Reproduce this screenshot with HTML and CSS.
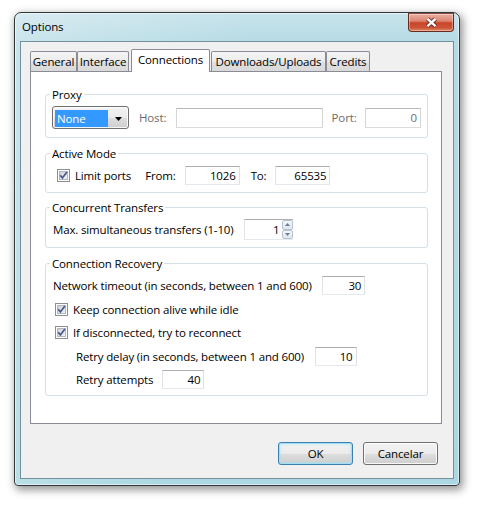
FILE: index.html
```html
<!DOCTYPE html>
<html lang="en">
<head>
<meta charset="utf-8">
<title>Options</title>
<link rel="stylesheet" href="styles.css">
</head>
<body>
<div class="window">
  <div class="titlebar">
    <span class="title">Options</span>
    <div class="close">
      <svg width="13" height="11" viewBox="0 0 13 11"><path d="M2.5 1.8 L10.5 9.2 M10.5 1.8 L2.5 9.2" stroke="#4b1a10" stroke-width="4.4" fill="none" opacity=".7"/><path d="M2.5 1.8 L10.5 9.2 M10.5 1.8 L2.5 9.2" stroke="#fff" stroke-width="2.4" fill="none"/></svg>
    </div>
  </div>
  <div class="client">
    <div class="tabs">
      <div class="tab t-gen">General</div>
      <div class="tab t-int">Interface</div>
      <div class="tab active t-con">Connections</div>
      <div class="tab t-dl">Downloads/Uploads</div>
      <div class="tab t-cr">Credits</div>
    </div>
    <div class="panel">
      <fieldset class="group g-proxy">
        <legend>Proxy</legend>
        <div class="gbody">
          <div class="row">
            <div class="combo">
              <span class="combo-val">None</span>
              <span class="combo-arrow"><svg width="7" height="4" viewBox="0 0 7 4"><path d="M0 0 H7 L3.5 4 Z" fill="#000"/></svg></span>
            </div>
            <span class="lbl disabled lbl-host">Host:</span>
            <span class="edit off host"></span>
            <span class="lbl disabled lbl-port">Port:</span>
            <span class="edit off port">0</span>
          </div>
        </div>
      </fieldset>

      <fieldset class="group g-active">
        <legend>Active Mode</legend>
        <div class="gbody">
          <div class="row">
            <svg class="chk" width="13" height="13" viewBox="0 0 13 13"><defs><linearGradient id="cb1" x1="0" y1="0" x2="1" y2="1"><stop offset="0" stop-color="#c9cdd3"/><stop offset="1" stop-color="#f6f6f7"/></linearGradient></defs><rect x="0.5" y="0.5" width="12" height="12" fill="#fdfdfd" stroke="#8e8f8f"/><rect x="2.5" y="2.5" width="8" height="8" fill="url(#cb1)" stroke="#b3b8be"/><path d="M3.2 6.3 L5.4 8.9 L9.9 2.9" fill="none" stroke="#45598e" stroke-width="1.7"/></svg>
            <span class="lbl chk-lbl">Limit ports</span>
            <span class="lbl lbl-from">From:</span>
            <span class="edit w55">1026</span>
            <span class="lbl lbl-to">To:</span>
            <span class="edit w55">65535</span>
          </div>
        </div>
      </fieldset>

      <fieldset class="group g-conc">
        <legend>Concurrent Transfers</legend>
        <div class="gbody">
          <div class="row">
            <span class="lbl">Max. simultaneous transfers (1-10)</span>
            <div class="spin">
              <span class="edit spin-edit">1</span>
              <div class="spin-btns">
                <span class="sbtn"><svg width="5" height="3" viewBox="0 0 5 3"><path d="M0 3 L2.5 0 L5 3 Z" fill="#6a7d96"/></svg></span>
                <span class="sbtn"><svg width="5" height="3" viewBox="0 0 5 3"><path d="M0 0 H5 L2.5 3 Z" fill="#6a7d96"/></svg></span>
              </div>
            </div>
          </div>
        </div>
      </fieldset>

      <fieldset class="group g-rec">
        <legend>Connection Recovery</legend>
        <div class="gbody">
          <div class="row r2">
            <span class="lbl">Network timeout (in seconds, between 1 and 600)</span>
            <span class="edit w43 gap">30</span>
          </div>
          <div class="row r2">
            <svg class="chk" width="13" height="13" viewBox="0 0 13 13"><defs><linearGradient id="cb2" x1="0" y1="0" x2="1" y2="1"><stop offset="0" stop-color="#c9cdd3"/><stop offset="1" stop-color="#f6f6f7"/></linearGradient></defs><rect x="0.5" y="0.5" width="12" height="12" fill="#fdfdfd" stroke="#8e8f8f"/><rect x="2.5" y="2.5" width="8" height="8" fill="url(#cb2)" stroke="#b3b8be"/><path d="M3.2 6.3 L5.4 8.9 L9.9 2.9" fill="none" stroke="#45598e" stroke-width="1.7"/></svg>
            <span class="lbl chk-lbl">Keep connection alive while idle</span>
          </div>
          <div class="row r2">
            <svg class="chk" width="13" height="13" viewBox="0 0 13 13"><defs><linearGradient id="cb3" x1="0" y1="0" x2="1" y2="1"><stop offset="0" stop-color="#c9cdd3"/><stop offset="1" stop-color="#f6f6f7"/></linearGradient></defs><rect x="0.5" y="0.5" width="12" height="12" fill="#fdfdfd" stroke="#8e8f8f"/><rect x="2.5" y="2.5" width="8" height="8" fill="url(#cb3)" stroke="#b3b8be"/><path d="M3.2 6.3 L5.4 8.9 L9.9 2.9" fill="none" stroke="#45598e" stroke-width="1.7"/></svg>
            <span class="lbl chk-lbl">If disconnected, try to reconnect</span>
          </div>
          <div class="row r2 indent">
            <span class="lbl">Retry delay (in seconds, between 1 and 600)</span>
            <span class="edit w42 gap">10</span>
          </div>
          <div class="row r2 indent">
            <span class="lbl">Retry attempts</span>
            <span class="edit w42 gap-s">40</span>
          </div>
        </div>
      </fieldset>
    </div>
    <div class="buttons">
      <div class="btn default">OK</div>
      <div class="btn">Cancelar</div>
    </div>
  </div>
</div>
</body>
</html>
```

FILE: styles.css
```css
* {
  box-sizing: border-box;
}

html, body {
  margin: 0;
  padding: 0;
}

body {
  width: 478px;
  height: 506px;
  overflow: hidden;
  background: #ffffff;
  font-family: "Open Sans", "Noto Sans", sans-serif;
  font-size: 11.5px;
  letter-spacing: -0.15px;
  line-height: 15px;
  color: #000;
}

/* window frame */
.window {
  width: 446px;
  height: 474px;
  margin: 12px 0 0 14px;
  border: 1px solid #30373b;
  border-radius: 7px 7px 4px 4px;
  background:
    linear-gradient(100deg, rgba(255,255,255,0.28), rgba(255,255,255,0) 45%),
    linear-gradient(#c8e3eb, #b6dbe4 30px, #abd8e2);
  box-shadow: 2px 3px 8px 1px rgba(0,0,0,0.42), inset 0 0 0 1px rgba(255,255,255,0.55);
  display: flex;
  flex-direction: column;
}

.titlebar {
  height: 28px;
  display: flex;
  align-items: flex-start;
  padding: 0 5px 0 7px;
}

.title {
  margin-top: 6px;
  color: #000;
}

.close {
  margin-left: auto;
  width: 46px;
  height: 19px;
  border: 1px solid #6b2a1d;
  border-top-color: #8a4a3d;
  border-radius: 0 0 4px 4px;
  background: linear-gradient(#eab0a2, #dc8470 42%, #c9452b 52%, #cc5334 80%, #dd8a66);
  box-shadow: inset 0 0 0 1px rgba(255,255,255,0.35);
  display: flex;
  align-items: center;
  justify-content: center;
}

.close svg {
  display: block;
}

/* client area */
.client {
  flex: 1;
  margin: 0 5px 6px 5px;
  border: 1px solid #74909c;
  background: #f0f0f0;
  display: flex;
  flex-direction: column;
  padding: 7px 11px 0 9px;
}

/* tabs */
.tabs {
  height: 22px;
  display: flex;
  align-items: flex-end;
}

.tab {
  height: 20px;
  border: 1px solid #898c95;
  border-bottom: none;
  border-radius: 2px 2px 0 0;
  background: linear-gradient(#f5f5f5, #ebebeb 50%, #e0e0e0 52%, #d9d9d9);
  line-height: 19px;
  text-align: center;
  white-space: nowrap;
}

.tab.active {
  height: 23px;
  margin-bottom: -1px;
  padding-bottom: 3px;
  background: #ffffff;
  position: relative;
  z-index: 1;
}

.t-gen { width: 47px; }
.t-int { width: 52px; margin-right: 2px; }
.t-con { width: 79px; margin-right: 1px; }
.t-dl  { width: 115px; }
.t-cr  { width: 44px; }

.panel {
  height: 353px;
  border: 1px solid #898c95;
  background: #ffffff;
  padding: 15px 13px 0 14px;
}

/* group boxes */
.group {
  margin: 0;
  padding: 0;
  border: 1px solid #d5dfe5;
  border-radius: 3px;
  min-width: 0;
}

.group legend {
  margin-left: 4px;
  padding: 0 2px;
  line-height: 15px;
}

.g-active { margin-top: 8px; }
.g-conc { margin-top: 7px; }
.g-rec { margin-top: 8px; }

.g-proxy .gbody { padding: 4px 6px 8px 6px; }
.g-active .gbody { padding: 3px 6px 5px 9px; }
.g-conc .gbody { padding: 3px 6px 6px 7px; }
.g-rec .gbody { padding: 3px 6px 3.5px 7px; }

.row {
  display: flex;
  align-items: center;
  height: 23px;
}

.row.r2 {
  height: 23.5px;
}

.row.indent {
  padding-left: 23px;
}

.lbl {
  white-space: nowrap;
}

.disabled {
  color: #6d6d6d;
}

/* combo box */
.combo {
  width: 77px;
  height: 23px;
  border: 1px solid #707070;
  border-radius: 3px;
  background: linear-gradient(#f3f3f3, #ebebeb 50%, #dddddd 52%, #cfcfcf);
  box-shadow: inset 0 0 0 1px rgba(255,255,255,0.8);
  display: flex;
  align-items: center;
  padding-left: 2px;
}

.combo-val {
  width: 53px;
  height: 17px;
  margin-top: 2px;
  background: #3399ff;
  color: #fff;
  line-height: 17px;
  padding-left: 2px;
}

.combo-arrow {
  flex: 1;
  display: flex;
  justify-content: center;
  padding-top: 2px;
}

.combo-arrow svg {
  display: block;
}

/* edits */
.edit {
  height: 19px;
  border: 1px solid;
  border-color: #abadb3 #dbdfe6 #e3e9ef #e2e3ea;
  background: #ffffff;
  text-align: right;
  padding-right: 3px;
  line-height: 17px;
  white-space: nowrap;
}

.edit.off {
  height: 20px;
  border-color: #b8b8b8 #d6d6d6 #dcdcdc #d6d6d6;
  color: #6d6d6d;
  line-height: 18px;
}

.lbl-host { margin: 0 9.5px 0 10px; }
.host { flex: 1; }
.lbl-port { margin: 0 8.5px 0 9px; }
.port { width: 56px; }

.chk {
  display: block;
  flex: none;
  margin-left: 2px;
}

.chk-lbl {
  margin-left: 5px;
}

.lbl-from { margin: 0 9px 0 14px; }
.lbl-to { margin: 0 9px 0 11px; }

.w55 { width: 55px; }
.w43 { width: 43px; }
.w42 { width: 42px; }

.gap { margin-left: 10.5px; }
.gap-s { margin-left: 9px; }

/* spin */
.spin {
  display: flex;
  height: 21px;
  margin-left: 10px;
}

.spin-edit {
  width: 38px;
  height: 21px;
  line-height: 19px;
  padding-right: 2px;
  border-right: none;
}

.spin-btns {
  width: 11px;
  height: 21px;
  display: flex;
  flex-direction: column;
  border-top: 1px solid #abadb3;
  border-bottom: 1px solid #e3e9ef;
}

.sbtn {
  flex: 1;
  border: 1px solid #b9c3ce;
  border-radius: 2px;
  background: linear-gradient(#f3f6f9, #dfe6ee);
  display: flex;
  align-items: center;
  justify-content: center;
}

.sbtn svg {
  display: block;
}

/* buttons */
.buttons {
  display: flex;
  justify-content: flex-end;
  gap: 10px;
  margin-top: 18px;
  padding-right: 4px;
}

.btn {
  width: 75px;
  height: 23px;
  border: 1px solid #707070;
  border-radius: 3px;
  background: linear-gradient(#f3f3f3, #ebebeb 50%, #dddddd 52%, #cfcfcf);
  box-shadow: inset 0 0 0 1px rgba(255,255,255,0.85);
  display: flex;
  align-items: center;
  justify-content: center;
  line-height: 15px;
}

.btn.default {
  border-color: #3c7fb1;
  box-shadow: inset 0 0 0 1px #9fe0f4, inset 0 0 3px 1px rgba(160,225,245,0.7);
}
```
